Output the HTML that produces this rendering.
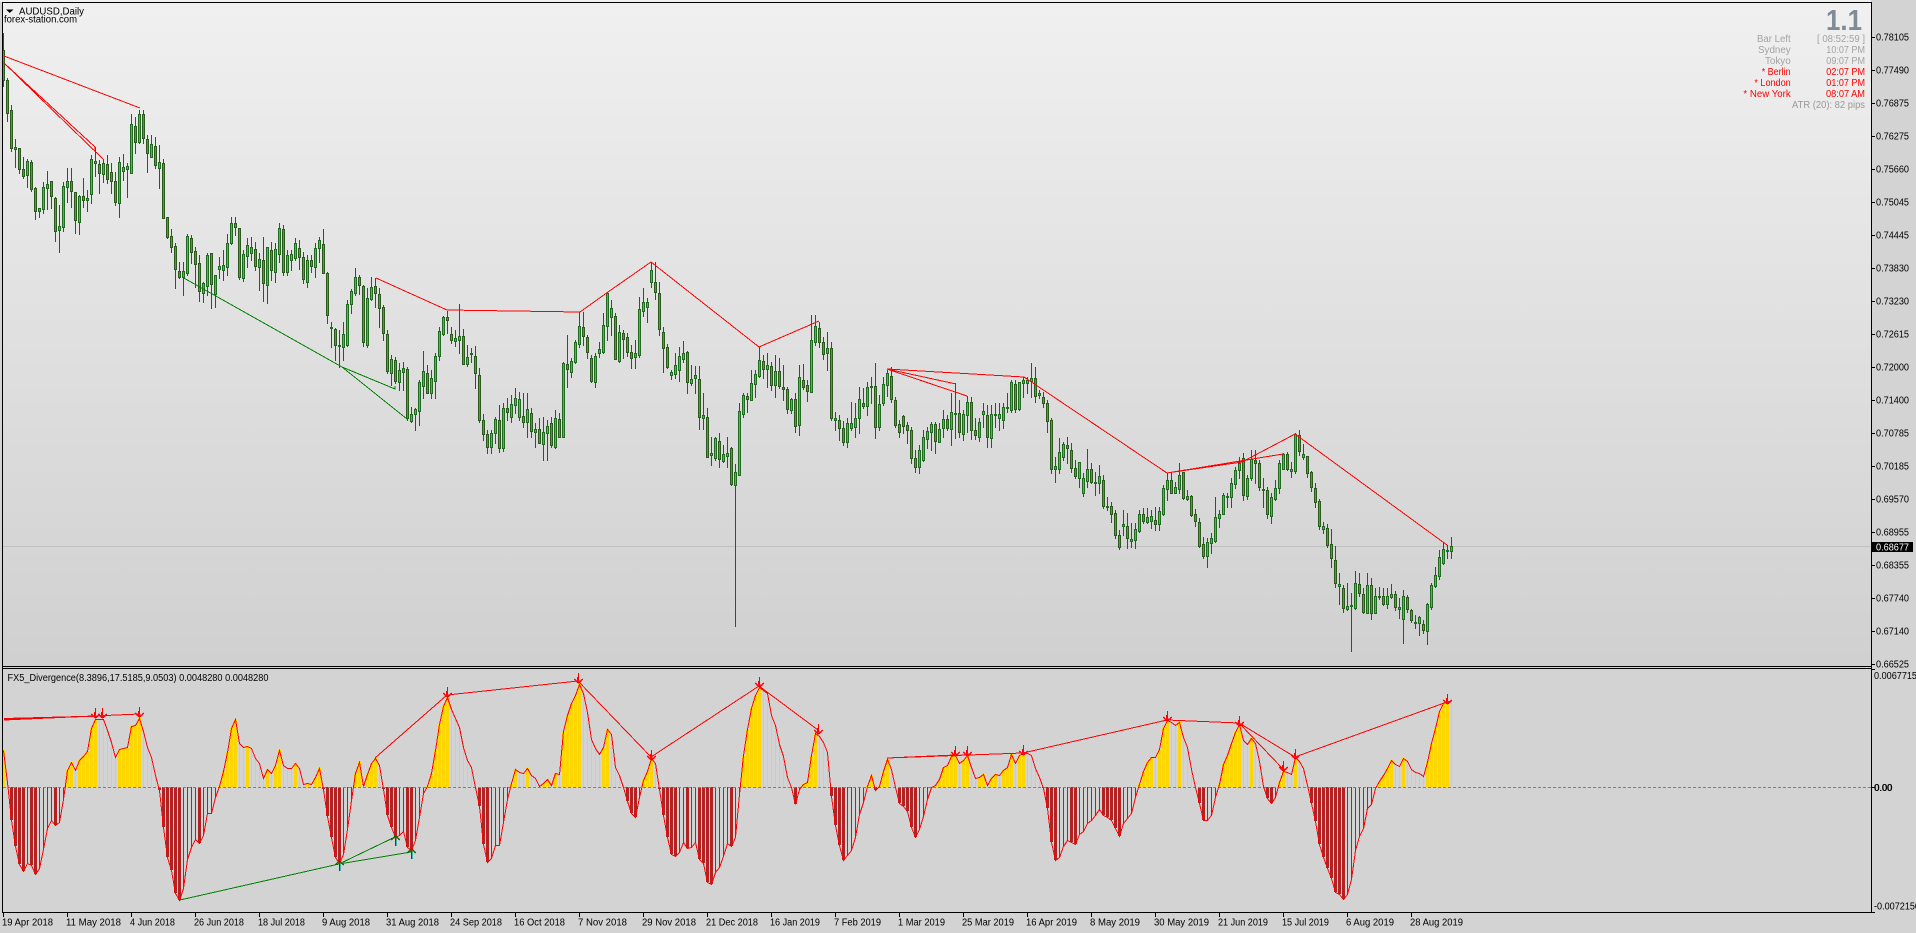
<!DOCTYPE html>
<html>
<head>
<meta charset="utf-8">
<title>AUDUSD,Daily</title>
<style>
html,body{margin:0;padding:0;background:#d3d3d3;width:1916px;height:933px;overflow:hidden}
svg{display:block;position:absolute;left:0;top:0}
text{font-family:"Liberation Sans",sans-serif;font-size:10px;fill:#000}
.g text{fill:#a3a3a3}
.r text{fill:#ff0000}
</style>
</head>
<body>
<svg id="s" width="1916" height="933" viewBox="0 0 1916 933" xmlns="http://www.w3.org/2000/svg">
<defs>
<linearGradient id="bg" x1="0" y1="0" x2="0" y2="1">
<stop offset="0" stop-color="#f0f0f0"/>
<stop offset="1" stop-color="#d0d0d0"/>
</linearGradient>
</defs>
<rect x="0" y="0" width="1916" height="933" fill="#d3d3d3"/>
<rect x="0" y="0" width="1871" height="2" fill="#f0f0f0"/>
<rect x="3" y="3" width="1868" height="663" fill="url(#bg)"/>
<path d="M3 546.5H1871" stroke="#c0c0c0" stroke-width="1" shape-rendering="crispEdges"/>
<g id="candles"></g>
<g id="osc"></g>
<path shape-rendering="crispEdges" fill="none" stroke="#ff0000" stroke-width="1" d="M4 56L140 108M4 63L95 147V152M4 63L103 159M376 278L447 310L580 312L608 292L651 262L759 347L819 321M887 369L1024 377L1167 473L1283 454M1167 473L1242 462L1280 442L1295 434L1447 545M887 369L956 384M887 369L967 396"/>
<path shape-rendering="crispEdges" fill="none" stroke="#008000" stroke-width="1" d="M182 277L342 367L395 389V386M342 367L407 419"/>
<path shape-rendering="crispEdges" fill="none" stroke="#ff0000" stroke-width="1" d="M4 719L95 716M4 719L102 716M4 720L139 714M375 758L447 695L578 681L651 757L759 686L818 730M887 758L955 755M887 758L967 755M887 758L1023 753L1167 720L1239 723L1295 757L1447 702M1239 723L1283 769M4 718.500L100 716"/>
<path shape-rendering="crispEdges" fill="none" stroke="#008000" stroke-width="1" d="M180 900L339 864L395 837M339 864L411 852"/>
<g id="marks"></g>

<!-- frame -->
<path shape-rendering="crispEdges" fill="none" stroke="#000" stroke-width="1" d="M2.500 2.500H1871.500V912.500H2.500ZM2.500 666.500H1871.500M2.500 668.500H1871.500"/>
<path shape-rendering="crispEdges" fill="none" stroke="#000" stroke-width="1" id="ticks" d=""/>

<!-- header text -->
<path d="M6 9.500H13.500L9.700 13Z" fill="#000"/>
<text x="19" y="14.500" textLength="65" lengthAdjust="spacingAndGlyphs">AUDUSD,Daily</text>
<text x="4" y="22.500" textLength="73" lengthAdjust="spacingAndGlyphs">forex-station.com</text>
<text x="7.500" y="681" textLength="261" lengthAdjust="spacingAndGlyphs">FX5_Divergence(8.3896,17.5185,9.0503) 0.0048280 0.0048280</text>

<!-- info panel -->
<text x="1826" y="30" textLength="36" lengthAdjust="spacingAndGlyphs" style="font-size:29px;font-weight:bold;fill:#7f8b97">1.1</text>
<g class="g">
<text x="1757" y="42.200" textLength="33.700" lengthAdjust="spacingAndGlyphs">Bar Left</text>
<text x="1817" y="42.200" textLength="48" lengthAdjust="spacingAndGlyphs">[ 08:52:59 ]</text>
<text x="1758" y="53.200" textLength="32.700" lengthAdjust="spacingAndGlyphs">Sydney</text>
<text x="1826.300" y="53.200" textLength="38.700" lengthAdjust="spacingAndGlyphs">10:07 PM</text>
<text x="1765" y="64.200" textLength="25.700" lengthAdjust="spacingAndGlyphs">Tokyo</text>
<text x="1826.300" y="64.200" textLength="38.700" lengthAdjust="spacingAndGlyphs">09:07 PM</text>
<text x="1792" y="108.200" textLength="73" lengthAdjust="spacingAndGlyphs" style="fill:#999">ATR (20): 82 pips</text>
</g>
<g class="r">
<text x="1761.700" y="75.200" textLength="29" lengthAdjust="spacingAndGlyphs">* Berlin</text>
<text x="1826.300" y="75.200" textLength="38.700" lengthAdjust="spacingAndGlyphs">02:07 PM</text>
<text x="1754.400" y="86.200" textLength="36.300" lengthAdjust="spacingAndGlyphs">* London</text>
<text x="1826.300" y="86.200" textLength="38.700" lengthAdjust="spacingAndGlyphs">01:07 PM</text>
<text x="1743.400" y="97.200" textLength="47.300" lengthAdjust="spacingAndGlyphs">* New York</text>
<text x="1826" y="97.200" textLength="39" lengthAdjust="spacingAndGlyphs">08:07 AM</text>
</g>

<!-- price axis -->
<g>
<text x="1876" y="40.500" textLength="33" lengthAdjust="spacingAndGlyphs">0.78105</text>
<text x="1876" y="73.500" textLength="33" lengthAdjust="spacingAndGlyphs">0.77490</text>
<text x="1876" y="106.500" textLength="33" lengthAdjust="spacingAndGlyphs">0.76875</text>
<text x="1876" y="139.500" textLength="33" lengthAdjust="spacingAndGlyphs">0.76275</text>
<text x="1876" y="172.500" textLength="33" lengthAdjust="spacingAndGlyphs">0.75660</text>
<text x="1876" y="205.500" textLength="33" lengthAdjust="spacingAndGlyphs">0.75045</text>
<text x="1876" y="238.500" textLength="33" lengthAdjust="spacingAndGlyphs">0.74445</text>
<text x="1876" y="271.500" textLength="33" lengthAdjust="spacingAndGlyphs">0.73830</text>
<text x="1876" y="304.500" textLength="33" lengthAdjust="spacingAndGlyphs">0.73230</text>
<text x="1876" y="337.500" textLength="33" lengthAdjust="spacingAndGlyphs">0.72615</text>
<text x="1876" y="370.500" textLength="33" lengthAdjust="spacingAndGlyphs">0.72000</text>
<text x="1876" y="403.500" textLength="33" lengthAdjust="spacingAndGlyphs">0.71400</text>
<text x="1876" y="436.500" textLength="33" lengthAdjust="spacingAndGlyphs">0.70785</text>
<text x="1876" y="469.500" textLength="33" lengthAdjust="spacingAndGlyphs">0.70185</text>
<text x="1876" y="502.500" textLength="33" lengthAdjust="spacingAndGlyphs">0.69570</text>
<text x="1876" y="535.500" textLength="33" lengthAdjust="spacingAndGlyphs">0.68955</text>
<text x="1876" y="568.500" textLength="33" lengthAdjust="spacingAndGlyphs">0.68355</text>
<text x="1876" y="601.500" textLength="33" lengthAdjust="spacingAndGlyphs">0.67740</text>
<text x="1876" y="634.500" textLength="33" lengthAdjust="spacingAndGlyphs">0.67140</text>
<text x="1876" y="667.500" textLength="33" lengthAdjust="spacingAndGlyphs">0.66525</text>
<rect x="1872" y="542" width="41" height="10" fill="#000"/>
<text x="1876" y="550.500" textLength="33" lengthAdjust="spacingAndGlyphs" style="fill:#fff">0.68677</text>
<text x="1874" y="679" textLength="43" lengthAdjust="spacingAndGlyphs">0.0067715</text>
<text x="1874" y="791" textLength="18" lengthAdjust="spacingAndGlyphs">0.00</text>
<text x="1874.500" y="791" textLength="18" lengthAdjust="spacingAndGlyphs">0.00</text>
<text x="1874" y="909.500" textLength="46" lengthAdjust="spacingAndGlyphs">-0.0072150</text>
</g>

<!-- time axis -->
<g>
<text x="2" y="925.500" textLength="51" lengthAdjust="spacingAndGlyphs">19 Apr 2018</text>
<text x="66" y="925.500" textLength="55" lengthAdjust="spacingAndGlyphs">11 May 2018</text>
<text x="130" y="925.500" textLength="45" lengthAdjust="spacingAndGlyphs">4 Jun 2018</text>
<text x="194" y="925.500" textLength="50" lengthAdjust="spacingAndGlyphs">26 Jun 2018</text>
<text x="258" y="925.500" textLength="47" lengthAdjust="spacingAndGlyphs">18 Jul 2018</text>
<text x="322" y="925.500" textLength="48" lengthAdjust="spacingAndGlyphs">9 Aug 2018</text>
<text x="386" y="925.500" textLength="53" lengthAdjust="spacingAndGlyphs">31 Aug 2018</text>
<text x="450" y="925.500" textLength="52" lengthAdjust="spacingAndGlyphs">24 Sep 2018</text>
<text x="514" y="925.500" textLength="51" lengthAdjust="spacingAndGlyphs">16 Oct 2018</text>
<text x="578" y="925.500" textLength="49" lengthAdjust="spacingAndGlyphs">7 Nov 2018</text>
<text x="642" y="925.500" textLength="54" lengthAdjust="spacingAndGlyphs">29 Nov 2018</text>
<text x="706" y="925.500" textLength="52" lengthAdjust="spacingAndGlyphs">21 Dec 2018</text>
<text x="770" y="925.500" textLength="50" lengthAdjust="spacingAndGlyphs">16 Jan 2019</text>
<text x="834" y="925.500" textLength="47" lengthAdjust="spacingAndGlyphs">7 Feb 2019</text>
<text x="898" y="925.500" textLength="47" lengthAdjust="spacingAndGlyphs">1 Mar 2019</text>
<text x="962" y="925.500" textLength="52" lengthAdjust="spacingAndGlyphs">25 Mar 2019</text>
<text x="1026" y="925.500" textLength="51" lengthAdjust="spacingAndGlyphs">16 Apr 2019</text>
<text x="1090" y="925.500" textLength="50" lengthAdjust="spacingAndGlyphs">8 May 2019</text>
<text x="1154" y="925.500" textLength="55" lengthAdjust="spacingAndGlyphs">30 May 2019</text>
<text x="1218" y="925.500" textLength="50" lengthAdjust="spacingAndGlyphs">21 Jun 2019</text>
<text x="1282" y="925.500" textLength="47" lengthAdjust="spacingAndGlyphs">15 Jul 2019</text>
<text x="1346" y="925.500" textLength="48" lengthAdjust="spacingAndGlyphs">6 Aug 2019</text>
<text x="1410" y="925.500" textLength="53" lengthAdjust="spacingAndGlyphs">28 Aug 2019</text>
</g>
</svg>
<script>
(function(){
var NS="http://www.w3.org/2000/svg";
// candles: high top bottom low color (g/r), values in crop pixels with y offset oy, y scale 3
var segs=[
[0,"100 150 240 258 r;235 240 338 362 r;316 330 443 452 r;418 441 446 500 g;445 445 508 520 r;470 508 528 535 r;478 484 525 562 g;480 487 566 572 r;560 565 632 658 r;625 625 632 650 g;545 561 626 640 g;513 553 563 628 g;543 544 587 625 r;590 595 692 722 r;615 679 689 755 g;546 558 682 692 g;505 544 562 605 g;505 544 572 620 r;575 576 659 698 r;585 589 665 702 g;535 589 600 622 r;570 595 600 632 g;465 477 581 608 g;440 484 488 528 g;480 492 518 580 r;478 488 521 545 g;465 492 537 548 r;490 517 542 578 r;515 544 605 615 r;470 487 608 652 g;462 502 512 540 g;490 499 506 590 g;342 373 518 518 g;350 378 425 460 r;330 343 426 430 g;330 343 414 430 r;406 416 458 515 r;405 433 470 470 g;410 439 494 505 r;435 487 503 565 g;478 489 653 653 r;650 652 711 713 r;688 709 740 755 r;730 739 806 865 r;785 814 831 835 r;785 814 831 885 g;702 707 820 825 g;705 714 755 790 r;740 754 791 860 r;765 790 873 902 r;845 850 878 905 g;760 765 857 885 g;758 760 853 923 r;825 825 882 920 g"],
[660,"110 139 147 175 g;90 135 150 180 g;42 70 140 165 g;-10 10 68 72 g;-8 10 20 45 r;25 25 170 178 r;90 103 173 182 g;55 75 107 140 g;50 82 98 120 g;65 87 137 150 r;100 117 140 210 g;50 121 188 242 r;80 82 196 250 g;65 90 150 180 r;70 88 155 185 g;10 25 102 125 g;15 27 155 165 r;90 105 155 165 g;90 103 120 150 g;55 70 113 120 g;60 85 110 148 r;95 112 176 190 r;105 120 185 200 g;105 119 137 155 r;70 85 140 170 g;50 60 85 125 g;27 72 160 160 r;155 160 285 310 r;305 322 323 380 g;325 328 376 420 r;330 375 377 440 g;305 343 380 420 g;240 252 375 378 g;208 214 253 280 g;145 172 218 225 g;165 172 194 222 r;195 198 365 378 r;205 235 375 380 g;170 202 238 240 g;175 198 218 260 r;205 222 263 320 r;255 262 340 360 r;330 343 452 460 r;405 418 458 495 g;410 420 482 490 r;430 450 485 510 g;425 445 455 510 g;440 447 595 600 r;560 583 602 605 g;565 568 583 630 g;480 487 572 615 g;393 453 497 535 g;435 460 518 520 r;450 475 518 535 g;400 408 482 535 g;320 334 408 420 g;287 292 343 345 g;272 291 299 340 r;320 342 359 370 r;330 354 362 378 g;253 349 359 400 g;328 349 431 433 r;375 411 431 437 g;385 400 403 425 g;378 409 460 503 r;445 466 600 605 r;582 601 641 660 r;630 642 682 700 r;630 640 680 700 g;590 598 640 670 g;555 600 685 695 r;550 565 683 693 g;535 565 577 600 r;525 553 590 605 g;505 535 555 580 g;515 538 590 600 g;520 588 605 620 r;520 568 605 650 g;565 580 632 650 r;610 628 635 680 g;595 628 668 670 r;590 637 672 720 g;600 618 638 720 g;590 610 675 680 r;570 595 682 685 g;580 597 650 652 r;425 430 650 650 g;345 433 447 500 r;415 424 455 470 g;360 367 425 430 g;275 319 372 380 g;275 320 347 375 r;345 352 397 415 r;405 415 484 487 r;400 409 487 500 g;365 388 398 410 g;280 316 396 400 g;218 218 319 360 g;240 265 290 345 g;280 289 416 418 r;315 337 422 425 g;330 340 356 415 r;340 352 395 408 r;375 397 413 445 r;360 400 410 445 g;230 268 405 410 g"],
[690,"175 217 242 258 g;205 217 230 275 g;97 121 155 172 g;97 157 185 207 r;155 190 298 315 r;292 307 355 425 r;343 352 410 415 r;420 427 434 447 g;370 406 431 445 g;350 379 420 452 g;333 370 386 395 g;363 367 455 490 r;405 447 458 465 g;408 436 443 490 g;408 448 560 597 r;490 556 563 597 g;535 562 680 682 r;620 670 675 705 g;620 625 685 690 g;610 634 687 712 r;645 673 692 695 g;620 668 678 710 g;650 653 762 765 r;703 727 765 1187 g;520 544 734 736 g;490 496 551 560 g;490 497 508 545 r;420 458 509 510 g;420 433 461 500 g;352 391 437 440 g;375 394 417 445 r;370 406 418 470 g;395 409 465 480 r;375 424 466 500 g;385 424 467 475 r;405 470 478 510 r;470 478 538 550 r;503 508 540 548 g;490 508 587 605 r;405 442 584 615 g;403 450 470 476 r;450 465 482 512 r;255 331 485 487 g;255 289 335 345 g;275 295 335 350 r;320 337 371 387 r;305 354 369 420 g;335 355 563 570 r;545 565 569 600 g;555 571 593 630 r;572 595 635 645 r;565 580 636 650 g;515 580 593 600 g;520 565 592 620 g;470 508 563 610 g;475 520 528 535 r;455 470 527 555 g;440 469 470 520 g;400 469 590 625 r;495 523 590 600 g;440 462 518 525 g;420 430 466 498 g;412 439 508 515 r;500 511 585 590 r;570 583 605 622 r;555 559 587 610 r;575 586 600 640 r;590 600 683 700 r;660 685 710 725 r;645 660 712 730 g;600 622 690 692 g;590 603 627 655 g;575 583 605 660 g;575 583 632 670 r;580 598 635 635 g;540 568 595 620 g;555 568 594 600 r;490 545 596 645 g;460 550 553 625 g;510 550 605 620 r;540 552 612 630 g;497 517 555 605 g;500 517 600 628 r;565 600 615 628 r;565 577 620 632 g;520 544 552 590 g;525 556 620 650 r;525 553 624 650 g;520 552 553 590 g;520 553 564 600 g;520 531 570 595 g;490 530 532 545 g;450 456 540 545 g;450 462 537 545 r;455 457 537 540 g;440 450 458 500 g;440 450 458 490 g;400 445 453 500 g;410 445 497 515 r;480 489 494 505 g;485 501 518 530 r;510 520 572 605 r;565 571 716 730 r;680 709 716 755 g;625 667 716 730 g;635 643 680 690 g;620 645 653 700 r;640 661 713 725 r;690 715 737 745 r;695 697 743 770 g;730 745 788 798 g;657 718 752 770 g;700 718 755 760 r;725 757 758 795 g;705 739 758 790 g;735 751 827 835 r;800 828 830 840 g;815 828 851 875 r;840 850 915 925 r;900 916 950 957 r;840 882 887 915 g;850 889 925 953 r;880 927 932 950 g;880 898 930 955 g;840 853 902 905 g;835 853 873 880 r;835 861 875 880 g;840 859 873 895 g;830 871 881 900 r;830 843 881 900 g;765 775 853 855 g;730 750 776 810 g;730 751 788 790 r;755 771 789 790 g;700 736 776 790 g;725 727 803 808 r;780 798 806 810 g;795 799 854 857 r;838 853 872 888 r;865 875 947 950 r;922 942 977 985 r;925 937 977 1010 g;910 925 938 970 g;800 862 932 935 g;840 853 863 890 g;790 796 851 852 g;790 797 800 830 g;745 760 800 830 g;710 721 762 775 g;680 699 721 745 g;670 683 794 810 r;735 745 797 808 g;660 686 745 750 g;660 690 700 760 r;690 700 770 780 r;745 777 780 830 g;770 781 851 865 r;790 801 857 880 g;750 775 808 810 g;690 700 775 790 g"],
[1020,"338 342 386 388 g;335 342 388 390 r;365 388 392 412 g;280 283 392 398 g;270 284 332 345 r;313 342 352 357 g;348 349 398 412 r;393 396 442 452 r;430 445 485 500 r;478 483 557 566 r;545 558 566 578 g;552 564 615 620 r;567 613 655 680 r;618 660 728 740 r;700 733 737 792 g;735 745 803 815 r;730 799 806 810 g;760 796 797 932 g;693 730 805 808 g;700 733 758 768 r;745 763 815 820 r;700 736 818 820 g;715 736 818 836 r;745 769 818 820 g;740 769 772 778 g;745 769 791 795 r;745 769 791 805 g;732 763 771 775 g;752 763 802 810 r;775 802 808 835 g;750 769 836 910 g;765 771 808 815 r;808 811 839 845 r;825 847 850 865 g;827 832 850 884 g;840 853 870 880 r;790 792 872 913 g;730 736 801 806 g;681 705 738 742 g;630 652 708 718 g;605 627 670 672 g;615 630 632 653 g;590 618 632 653 g"]
];
var bodies="",wick="",idx=0,rg="",gg="";
segs.forEach(function(sg){
 var oy=sg[0];
 sg[1].split(";").forEach(function(b){
  var p=b.split(" "),h=+p[0],t=+p[1],o=+p[2],l=+p[3],c=p[4];
  var x=3+4*idx;idx++;
  var Y=function(v){return Math.round(oy/3*1+(v/3));};
  // oy stored as 3x real offset (crop top * 3)
  var yh=Y(h),yt=Y(t),yb=Y(o),yl=Y(l);
  wick+="M"+(x+.5)+" "+yh+"V"+(yl+1);
  var hh=Math.max(yb-yt,1);
  var r='<rect x="'+(x-1+.5)+'" y="'+(yt+.5)+'" width="2" height="'+hh+'"/>';
  if(c==="r")rg+=r;else gg+=r;
 });
});
document.getElementById("candles").innerHTML=
 '<path shape-rendering="crispEdges" fill="none" stroke="#2a5a1c" stroke-width="1" d="'+wick+'"/>'+
 '<g shape-rendering="crispEdges" fill="#cd5c4c" stroke="#2a5a1c" stroke-width="1">'+rg+'</g>'+
 '<g shape-rendering="crispEdges" fill="#32cd32" stroke="#1f6b1f" stroke-width="1">'+gg+'</g>';

// oscillator keypoints
var z3=[8,325,15,390,20,442,25,500,28,540,36,605,45,665,57,695,66,670,76,670,87,703,96,690,106,630,116,565,125,538,135,555,145,550,155,480,160,442,165,390,175,365,185,390,195,360,214,337,224,265,234,238,253,235,262,265,272,300,283,350,293,325,312,322,322,258,331,258,341,232,351,270,361,320,371,350,380,400,390,442,400,555,410,650,420,690,430,760,440,780,449,750,459,660,469,620,479,598,489,610,498,590,508,520,518,520,528,470,537,442,547,395,557,340,567,265,577,238,587,310,596,322,606,318,616,322,626,355,636,370,645,415,655,385,665,400,675,375,685,330,695,378,705,385,714,385,724,370,734,385,744,435,753,430,763,433,773,410,783,382,792,442,802,525,812,590,822,650,832,668,842,640,851,570,861,480,871,400,881,365,891,442,901,400,910,368,920,355,930,375,939,442,949,525,959,560,969,590,979,585,988,570,998,620,1008,630,1018,600,1028,530,1037,460,1047,440,1057,400,1067,330,1077,250,1086,200,1096,170,1106,205,1116,235,1125,255,1135,320,1145,360,1155,380,1165,442,1175,500,1184,610,1194,665,1204,655,1214,615,1224,615,1233,550,1243,480,1253,430,1263,388,1273,395,1283,400,1292,382,1302,405,1312,415,1322,437,1332,430,1341,415,1351,435,1361,398,1371,402,1380,275,1390,225,1400,190,1410,165,1420,130,1430,160,1440,220,1449,295,1459,325,1469,342,1479,320,1489,265,1498,280,1508,380,1518,405,1528,442,1537,480,1547,520,1557,532,1567,470];
var z4=[0,458,8,420,18,395,27,353,37,360,47,442,57,520,67,590,76,640,86,650,96,640,106,605,116,625,126,622,136,605,145,655,155,665,165,725,175,733,185,695,194,685,204,650,214,610,224,620,234,590,243,470,253,350,263,270,273,205,283,165,292,140,302,150,312,155,322,225,332,255,341,310,351,345,361,410,371,440,381,493,391,445,400,432,410,430,420,345,430,278,439,285,449,305,459,330,469,465,478,550,488,610,498,660,508,645,518,630,528,590,537,525,547,490,557,440,567,403,577,450,586,440,596,395,606,357,616,385,626,442,635,488,645,498,655,510,665,560,675,592,684,570,694,530,704,480,714,440,724,435,733,420,743,382,753,375,763,348,773,345,783,370,792,362,802,345,812,380,822,415,831,412,841,400,851,437,861,415,871,403,880,405,890,390,900,383,910,340,920,370,929,347,939,340,949,340,959,345,969,385,978,410,988,442,998,500,1008,605,1018,660,1028,650,1037,620,1047,600,1057,605,1067,612,1077,580,1086,575,1096,550,1106,540,1116,525,1125,505,1135,525,1145,530,1155,540,1165,565,1174,590,1184,550,1194,535,1204,520,1214,470,1224,430,1233,395,1243,365,1253,352,1263,350,1273,325,1282,265,1292,240,1302,245,1312,255,1322,245,1331,290,1341,320,1351,385,1361,442,1371,490,1380,540,1390,540,1400,525,1410,470,1420,430,1429,375,1439,345,1449,310,1459,275,1469,250,1478,300,1488,312,1498,295,1508,310,1518,365,1528,442,1537,475,1547,488,1557,470,1567,425];
var z5=[0,410,8,392,18,395,28,403,38,352,47,362,57,378,67,430,77,485,87,540,97,610,107,650,117,685,127,715,136,755,146,760,156,778,166,765,176,720,186,630,195,590,205,570,215,505,225,495,235,445,245,425,255,405,264,385,274,360,284,370,294,378,304,355,314,362,323,385,333,397,343,397,353,412,363,370,373,310,383,265,392,215,402,190,412,183,423,183];
var pts=[],i;
for(i=0;i<z3.length;i+=2)pts.push([z3[i]/2.45,640+z3[i+1]/3]);
for(i=0;i<z4.length;i+=2)pts.push([640+z4[i]/2.45,640+z4[i+1]/3]);
for(i=0;i<z5.length;i+=2)pts.push([1280+z5[i]/2.465,640+z5[i+1]/3]);
function val(x){
 if(x<=pts[0][0])return pts[0][1];
 for(var k=1;k<pts.length;k++){if(x<=pts[k][0]){var a=pts[k-1],b=pts[k];return a[1]+(b[1]-a[1])*(x-a[0])/(b[0]-a[0]);}}
 return pts[pts.length-1][1];
}
var zero=787,yb="",rb="",line="",prev=null;
for(i=0;i<363;i++){
 var x=3+4*i,y=Math.round(val(x+.5));
 line+=(i?"L":"M")+(x+.5)+" "+(y+.5);
 var pos=y<zero;
 var thick=prev===null?true:(pos?y<prev:y>prev);
 var xx=thick?x-1:x,w=thick?3:1;
 if(xx<3){w-=3-xx;xx=3;}
 var ry=pos?y:zero,rh=Math.abs(y-zero);
 if(rh>0){var r='<rect x="'+xx+'" y="'+ry+'" width="'+w+'" height="'+rh+'"/>';
  if(pos)yb+=r;else rb+=r;}
 prev=y;
}
document.getElementById("osc").innerHTML=
 '<g shape-rendering="crispEdges" fill="#ffd700">'+yb+'</g>'+
 '<g shape-rendering="crispEdges" fill="#b22222">'+rb+'</g>'+
 '<path shape-rendering="crispEdges" d="M3 787.500H1871" fill="none" stroke="#808080" stroke-width="1" stroke-dasharray="3 2"/>'+
 '<path shape-rendering="crispEdges" fill="none" stroke="#ff0000" stroke-width="1" d="'+line+'"/>';

// markers
var stars=[[95,715],[102,715],[139,714],[447,694],[578,680],[651,757],[759,684],[818,731],[955,753],[967,753],[1023,752],[1167,718],[1239,723],[1283,768],[1295,756],[1447,701]];
var m="";
stars.forEach(function(s){var x=s[0],y=s[1];
 m+='<path shape-rendering="crispEdges" d="M'+(x+.5)+' '+(y-7)+'V'+(y+3)+'M'+(x-.5)+' '+(y-3)+'V'+(y+3)+'M'+(x-4)+' '+(y-1)+'L'+(x+.5)+' '+(y+3)+'L'+(x+5)+' '+(y-1)+'" fill="none" stroke="#ff0000" stroke-width="1.3"/>';
 m+='<path shape-rendering="crispEdges" d="M'+(x-3)+' '+(y+1)+'H'+(x+4)+'" stroke="#ff1030" stroke-width="1"/>';
});
[[339,864],[395,839],[411,852]].forEach(function(s){var x=s[0],y=s[1];
 m+='<path shape-rendering="crispEdges" d="M'+(x+1.500)+' '+(y-1)+'V'+(y+7)+'" stroke="#40b0b0" stroke-width="1"/>';
 m+='<path shape-rendering="crispEdges" d="M'+(x+.5)+' '+(y-3)+'V'+(y+7)+'" stroke="#006400" stroke-width="1.300"/>';
 m+='<path shape-rendering="crispEdges" d="M'+(x-4)+' '+(y+1)+'L'+(x+.5)+' '+(y-3)+'L'+(x+5)+' '+(y+1)+'" fill="none" stroke="#007000" stroke-width="1.300"/>';
 m+='<path shape-rendering="crispEdges" d="M'+(x-2)+' '+(y-1)+'H'+(x+3)+'" stroke="#e02020" stroke-width="1"/>';
});
document.getElementById("marks").innerHTML=m;

// ticks
var t="";
for(i=0;i<20;i++){var py=Math.round(36.7+33*i);t+="M1871 "+(py+.5)+"H1875";}
t+="M1871 669.500H1875M1871 787.500H1875M1871 912.500H1875";
for(i=0;i<23;i++){t+="M"+(3.5+64*i)+" 912V917";}
document.getElementById("ticks").setAttribute("d",t);
})();
</script>
</body>
</html>
